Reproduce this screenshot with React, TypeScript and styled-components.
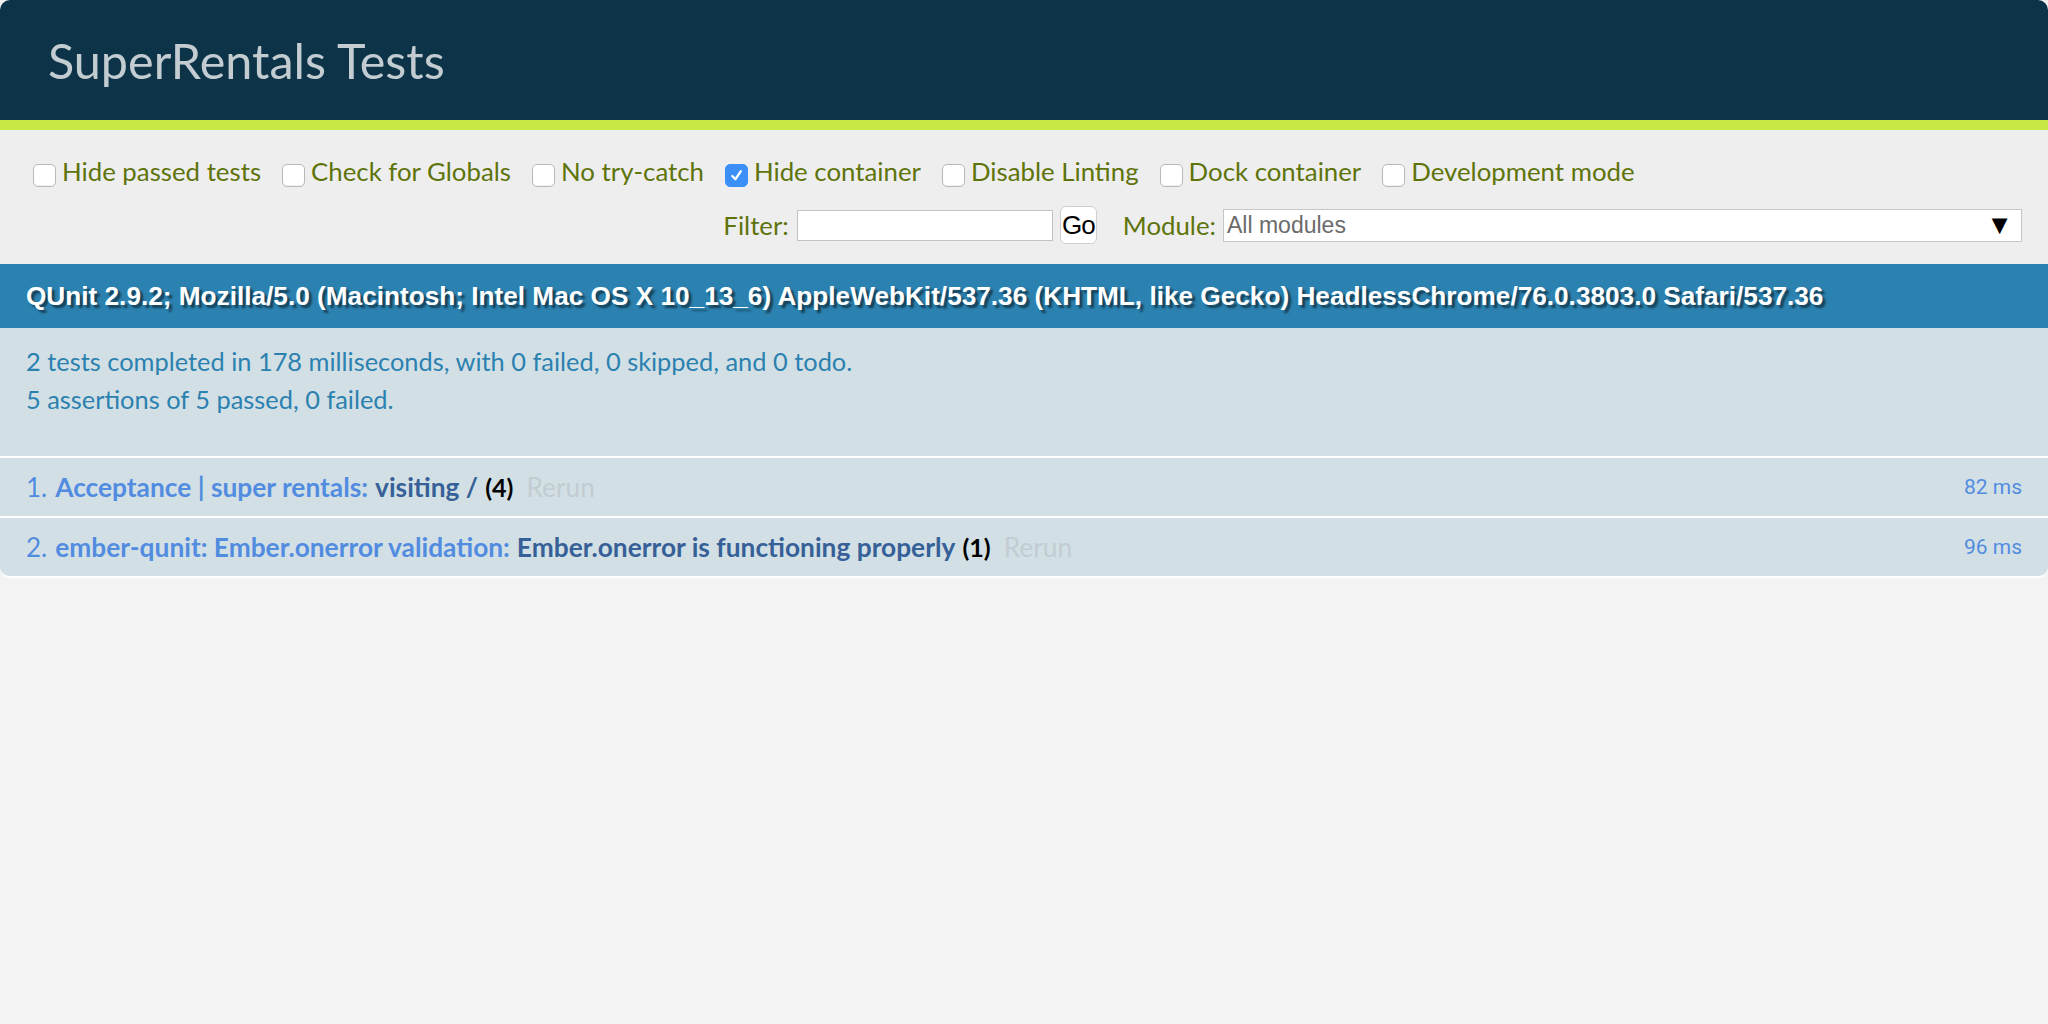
import React from "react";
import styled, { createGlobalStyle } from "styled-components";

const Global = createGlobalStyle`
  html, body { margin: 0; padding: 0; background: #f3f3f3; }
  body { font-family: Lato, "Noto Sans", sans-serif; }
`;

const Page = styled.div`
  display: flex;
  flex-direction: column;
`;

const Header = styled.h1`
  margin: 0;
  height: 120px;
  box-sizing: border-box;
  padding-left: 48px;
  display: flex;
  align-items: center;
  background: #0d3349;
  color: #c2ccd1;
  font-family: Lato, sans-serif;
  font-weight: 400;
  font-size: 48.5px;
  border-radius: 10px 10px 0 0;
`;

const Banner = styled.div`
  height: 10px;
  background: #c6e746;
`;

const Toolbar = styled.div`
  background: #eee;
  padding: 22px 26px 20px;
  display: flex;
  flex-direction: column;
  gap: 16px;
  color: #5e740b;
  font-size: 25.8px;
`;

const ConfigRow = styled.div`
  display: flex;
  align-items: center;
  height: 38px;
  gap: 14px;
`;

const Option = styled.label`
  display: flex;
  align-items: center;
  white-space: nowrap;
`;

const Box = styled.span<{ $checked?: boolean }>`
  width: 23px;
  height: 23px;
  box-sizing: border-box;
  margin: 9px 6px 0 7px;
  border-radius: 5px;
  display: inline-flex;
  align-items: center;
  justify-content: center;
  background: ${(p) => (p.$checked ? "#3b8ff6" : "#fff")};
  border: 1px solid ${(p) => (p.$checked ? "#3b8ff6" : "#b8b8b8")};
  box-shadow: ${(p) => (p.$checked ? "none" : "inset 0 -1px 1px rgba(0,0,0,0.06)")};
`;

const FilterRow = styled.div`
  display: flex;
  justify-content: flex-end;
  align-items: center;
  height: 38px;
`;

const FieldLabel = styled.span<{ $gap: number }>`
  margin-right: ${(p) => p.$gap}px;
`;

const TextInput = styled.div`
  width: 256px;
  height: 31px;
  box-sizing: border-box;
  background: #fff;
  border: 1px solid #c3c3c3;
  margin-right: 7px;
`;

const GoButton = styled.button`
  width: 37px;
  height: 38px;
  padding: 0;
  box-sizing: border-box;
  background: #fff;
  border: 1px solid #cfcfcf;
  border-radius: 6px;
  font-family: "Liberation Sans", Arial, sans-serif;
  font-size: 26px;
  letter-spacing: -1px;
  color: #000;
  margin-right: 26px;
`;

const SelectBox = styled.div`
  width: 799px;
  height: 33px;
  box-sizing: border-box;
  background: #fff;
  border: 1px solid #c6c6c6;
  display: flex;
  align-items: center;
  justify-content: space-between;
  padding: 0 8px 0 3px;
  font-family: "Liberation Sans", Arial, sans-serif;
  font-size: 23px;
  color: #6b6b6b;
`;

const Arrow = styled.span`
  color: #000;
  font-size: 27px;
  line-height: 1;
`;

const UserAgent = styled.div`
  height: 64px;
  box-sizing: border-box;
  padding: 0 26px;
  display: flex;
  align-items: center;
  background: #2b81af;
  color: #fff;
  font-family: "Liberation Sans", Arial, sans-serif;
  font-weight: 700;
  font-size: 26.2px;
  text-shadow: rgba(0, 0, 0, 0.5) 3px 3px 2px;
  white-space: nowrap;
  overflow: hidden;
`;

const Result = styled.div`
  height: 130px;
  box-sizing: border-box;
  padding: 14px 26px 0;
  background: #d2e0e6;
  color: #2b81af;
  font-size: 25.4px;
  line-height: 38px;
  border-bottom: 2px solid #fff;
`;

const Tests = styled.ol`
  margin: 0;
  padding: 0;
  list-style: none;
`;

const TestItem = styled.li<{ $last?: boolean }>`
  height: 60px;
  box-sizing: border-box;
  padding: 0 26px;
  display: flex;
  align-items: center;
  background: #d2e0e6;
  color: #528ce0;
  font-size: 26px;
  border-bottom: 2px solid #fff;
  border-radius: ${(p) => (p.$last ? "0 0 10px 10px" : "0")};
`;

const Num = styled.span`
  margin-right: 8px;
`;

const ModuleName = styled.strong`
  color: #528ce0;
  font-weight: 700;
  font-size: 26.3px;
  margin-right: 7px;
`;

const TestName = styled.strong`
  color: #366097;
  font-weight: 700;
  font-size: 26.3px;
  margin-right: 7px;
`;

const Counts = styled.b`
  color: #000;
  font-weight: 700;
  font-size: 25px;
`;

const Rerun = styled.span`
  color: #c2ccd1;
  margin-left: 13px;
  font-size: 26.3px;
`;

const Runtime = styled.span`
  margin-left: auto;
  font-family: Roboto, "Liberation Sans", sans-serif;
  font-size: 21px;
  color: #528ce0;
`;

const Check = () => (
  <svg width="15" height="15" viewBox="0 0 16 16">
    <path d="M3.5 8.5 L6.8 12 L12.5 3.5" fill="none" stroke="#fff" strokeWidth="2.4" strokeLinecap="round" strokeLinejoin="round" />
  </svg>
);

const options: { label: string; checked?: boolean }[] = [
  { label: "Hide passed tests" },
  { label: "Check for Globals" },
  { label: "No try-catch" },
  { label: "Hide container", checked: true },
  { label: "Disable Linting" },
  { label: "Dock container" },
  { label: "Development mode" },
];

const tests = [
  { n: 1, module: "Acceptance | super rentals:", name: "visiting /", count: 4, time: "82 ms" },
  { n: 2, module: "ember-qunit: Ember.onerror validation:", name: "Ember.onerror is functioning properly", count: 1, time: "96 ms" },
];

export default function App() {
  return (
    <Page>
      <Global />
      <Header>SuperRentals Tests</Header>
      <Banner />
      <Toolbar>
        <ConfigRow>
          {options.map((o) => (
            <Option key={o.label}>
              <Box $checked={o.checked}>{o.checked && <Check />}</Box>
              {o.label}
            </Option>
          ))}
        </ConfigRow>
        <FilterRow>
          <FieldLabel $gap={8}>Filter:</FieldLabel>
          <TextInput />
          <GoButton>Go</GoButton>
          <FieldLabel $gap={7}>Module:</FieldLabel>
          <SelectBox>
            <span>All modules</span>
            <Arrow>▼</Arrow>
          </SelectBox>
        </FilterRow>
      </Toolbar>
      <UserAgent>
        QUnit 2.9.2; Mozilla/5.0 (Macintosh; Intel Mac OS X 10_13_6) AppleWebKit/537.36 (KHTML, like Gecko) HeadlessChrome/76.0.3803.0 Safari/537.36
      </UserAgent>
      <Result>
        <div>2 tests completed in 178 milliseconds, with 0 failed, 0 skipped, and 0 todo.</div>
        <div>5 assertions of 5 passed, 0 failed.</div>
      </Result>
      <Tests>
        {tests.map((t, i) => (
          <TestItem key={t.n} $last={i === tests.length - 1}>
            <Num>{t.n}.</Num>
            <ModuleName>{t.module}</ModuleName>
            <TestName>{t.name}</TestName>
            <Counts>({t.count})</Counts>
            <Rerun>Rerun</Rerun>
            <Runtime>{t.time}</Runtime>
          </TestItem>
        ))}
      </Tests>
    </Page>
  );
}
